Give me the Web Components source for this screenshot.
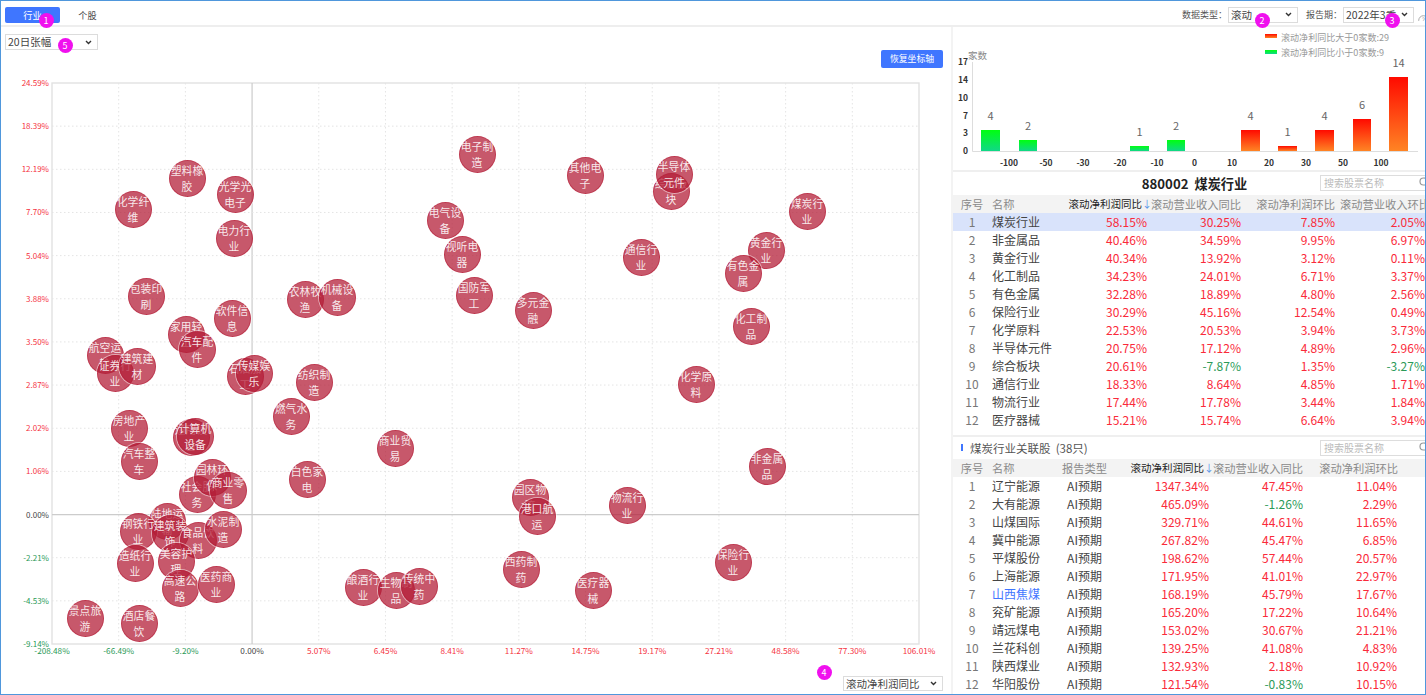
<!DOCTYPE html>
<html lang="zh-CN">
<head>
<meta charset="UTF-8">
<title>行业业绩分布</title>
<style>
  html, body { margin: 0; padding: 0; background: #fff; font-family: "Noto Sans CJK SC", "Liberation Sans", sans-serif; }
</style>
</head>
<body>
<stock-screen>
  <top-bar slot="bar">
    <tab-button active>行业</tab-button>
    <tab-button>个股</tab-button>
    <span slot="right" class="lb">数据类型：</span>
    <drop-select slot="right" style="width:70px;margin-right:8px">滚动</drop-select>
    <span slot="right" class="lb">报告期：</span>
    <drop-select slot="right" style="width:71px">2022年3季</drop-select>
    <help-mark slot="right"></help-mark>
  </top-bar>

  <left-panel slot="left">
    <drop-select slot="top" style="width:93px">20日张幅</drop-select>
    <blue-button slot="action">恢复坐标轴</blue-button>
    <scatter-chart id="scatter"></scatter-chart>
    <drop-select slot="bottom" style="width:100px;height:15px">滚动净利润同比</drop-select>
  </left-panel>

  <right-panel slot="right">
    <histo-chart slot="histo"></histo-chart>
    <panel-head slot="head1" center>880002&nbsp; 煤炭行业</panel-head>
    <data-table slot="table1" id="t1" cols="38px 60px 96px 94px 94px 90px"></data-table>
    <panel-head slot="head2" mark>煤炭行业关联股&nbsp; (38只)</panel-head>
    <data-table slot="table2" id="t2" cols="38px 71px 45px 102px 94px 94px 28px"></data-table>
  </right-panel>

  <step-badge x="46" y="20">1</step-badge>
  <step-badge x="1262" y="20">2</step-badge>
  <step-badge x="1392" y="20">3</step-badge>
  <step-badge x="824" y="672">4</step-badge>
  <step-badge x="65" y="45">5</step-badge>
</stock-screen>

<script>
const FONT = '"Noto Sans CJK SC", "Liberation Sans", sans-serif';
const RED = '#fa2a3a', GREEN = '#2b9a58', BLUE = '#3f76ff';

// 간단히 shadow 붙이는 공통 클래스
class Base extends HTMLElement {
  render(html) {
    if (!this.shadowRoot) this.attachShadow({ mode: 'open' });
    this.shadowRoot.innerHTML = html;
  }
}

class StockScreen extends Base {
  connectedCallback() {
    this.render(`<style>
      :host { display: block; position: relative; box-sizing: border-box; width: 1426px; height: 695px;
              border: 1px solid #4f97dc; overflow: hidden; font-family: ${FONT}; background: #fff; }
      .main { display: grid; grid-template-columns: 950px 472px; column-gap: 2px; background: #f3f3f3; height: 667px; }
    </style>
    <slot name="bar"></slot>
    <div class="main"><slot name="left"></slot><slot name="right"></slot></div>
    <slot></slot>`);
  }
}

class TopBar extends Base {
  connectedCallback() {
    this.render(`<style>
      :host { display: flex; align-items: center; justify-content: space-between; box-sizing: border-box;
              height: 26px; padding: 3px 0 0 4px; border-bottom: 2px solid #eee; background: #fff; }
      .l { display: flex; align-items: center; }
      .r { display: flex; align-items: center; }
      ::slotted(.lb) { font-size: 9px; color: #555; margin-right: 1px; white-space: nowrap; }
    </style>
    <div class="l"><slot></slot></div><div class="r"><slot name="right"></slot></div>`);
  }
}

class TabButton extends Base {
  connectedCallback() {
    this.render(`<style>
      :host { display: flex; align-items: center; justify-content: center; width: 55px; height: 16px;
              font-size: 9.2px; line-height: 16px; border-radius: 2px; color: #444; }
      :host([active]) { background: ${BLUE}; color: #fff; }
    </style><slot></slot>`);
  }
}

class DropSelect extends Base {
  connectedCallback() {
    this.render(`<style>
      :host { display: flex; align-items: center; justify-content: space-between; box-sizing: border-box; height: 16px;
              padding: 0 5px 0 2px; border: 1px solid #dcdcdc; background: #fff; font-size: 10.5px; color: #444;
              line-height: 14px; white-space: nowrap; overflow: hidden; }
      svg { flex: none; }
    </style><slot></slot>
    <svg width="7" height="5" viewBox="0 0 7 5"><path d="M1 1l2.5 2.5L6 1" fill="none" stroke="#333" stroke-width="1.4"/></svg>`);
  }
}

class HelpMark extends Base {
  connectedCallback() {
    this.render(`<style>
      :host { display: block; width: 8px; height: 13px; margin-left: 3px; overflow: hidden; }
    </style>
    <svg width="12" height="13" viewBox="0 0 12 13"><circle cx="6.5" cy="6.5" r="4.8" fill="none" stroke="#aaa"/>
    <text x="6.5" y="9" text-anchor="middle" font-size="7" fill="#aaa">?</text></svg>`);
  }
}

class BlueButton extends Base {
  connectedCallback() {
    this.render(`<style>
      :host { display: flex; align-items: center; justify-content: center; width: 62px; height: 18px; border-radius: 2px;
              background: ${BLUE}; color: #fff; font-size: 8.8px; line-height: 18px; }
    </style><slot></slot>`);
  }
}

class LeftPanel extends Base {
  connectedCallback() {
    this.render(`<style>
      :host { display: block; background: #fff; height: 667px; }
      .top { display: flex; padding: 7px 0 0 4px; }
      .act { display: flex; justify-content: flex-end; padding-right: 8px; }
      .chart { margin-top: 2px; }
      .bot { display: flex; justify-content: flex-end; padding: 6px 8px 0 0; }
    </style>
    <div class="top"><slot name="top"></slot></div>
    <div class="act"><slot name="action"></slot></div>
    <div class="chart"><slot></slot></div>
    <div class="bot"><slot name="bottom"></slot></div>`);
  }
}

class RightPanel extends Base {
  connectedCallback() {
    this.render(`<style>
      :host { display: flex; flex-direction: column; background: #fff; height: 667px; overflow: hidden; }
      .sep { height: 2px; background: #efefef; flex: none; }
      .gap { height: 6px; flex: none; }
    </style>
    <slot name="histo"></slot><div class="sep"></div>
    <slot name="head1"></slot><slot name="table1"></slot>
    <div class="gap"></div><div class="sep"></div>
    <slot name="head2"></slot><slot name="table2"></slot>`);
  }
}

class PanelHead extends Base {
  connectedCallback() {
    const center = this.hasAttribute('center');
    this.render(`<style>
      :host { display: flex; position: relative; align-items: center; box-sizing: border-box; height: ${center ? 23 : 22}px;
              flex: none; color: ${center ? '#222' : '#555'}; font-size: ${center ? '13.2px' : '11.5px'};
              font-weight: ${center ? 700 : 400}; justify-content: ${center ? 'center' : 'flex-start'};
              padding-left: ${center ? 11 : 17}px; white-space: nowrap; }
      i { position: absolute; left: 8px; top: 7px; width: 2px; height: 7px; background: ${BLUE}; }
      .s { position: absolute; left: 367px; top: 3px; width: 120px; height: 16px; box-sizing: border-box; border: 1px solid #ddd;
           font: 400 10px/14px ${FONT}; color: #bbb; padding-left: 3px; background: #fff; }
      svg { position: absolute; left: 97px; top: 0; }
    </style>${this.hasAttribute('mark') ? '<i></i>' : ''}<slot></slot>
    <div class="s">搜索股票名称<svg width="12" height="13" viewBox="0 0 12 13"><circle cx="5.5" cy="5.5" r="3.5" fill="none" stroke="#999" stroke-width="1.2"/><path d="M8 8l3 3" stroke="#999" stroke-width="1.2"/></svg></div>`);
  }
}

class DataTable extends Base {
  setData(head, rows) {
    const cols = this.getAttribute('cols');
    const color = v => v.startsWith('-') ? GREEN : RED;
    const cell = (c, i) => {
      if (i === 0) return `<div class="idx">${c}</div>`;
      if (i === 1) return `<div class="name${c.startsWith('*') ? ' link' : ''}">${c.replace('*', '')}</div>`;
      if (c === 'AI预期') return `<div class="ai">${c}</div>`;
      return `<div class="num" style="color:${color(c)}">${c}</div>`;
    };
    const hcell = (c, i) => {
      if (i < 2) return `<div class="${i ? 'hname' : 'idx hi'}">${c}</div>`;
      if (c === '报告类型') return `<div class="hname" style="padding:0">${c}</div>`;
      if (c.endsWith('↓')) return `<div class="hn sort">${c.slice(0, -1)}<b>↓</b></div>`;
      return `<div class="hn">${c}</div>`;
    };
    const last = this.id === 't1' ? -5 : -1;
    this.render(`<style>
      :host { display: block; flex: none; overflow: hidden; }
      .row { display: grid; grid-template-columns: ${cols}; height: 18px; line-height: 18px; font-size: 12px; color: #444; white-space: nowrap; }
      .row.sel { background: #d9e3fb; }
      .row.h { background: #f3f3f3; font-size: 11.25px; color: #8a8a8a; }
      .idx { text-align: center; color: #777; }
      .hi { color: #8a8a8a; }
      .name { padding-left: 1px; color: #444; }
      .hname { padding-left: 1px; }
      .link { color: ${BLUE}; }
      .ai { text-align: center; color: #444; }
      .num { text-align: right; }
      .hn { display: flex; justify-content: flex-end; }
      .hn:last-child { margin-right: ${last}px; }
      .sort { color: #222; font-size: 10.5px; margin-right: -1px; }
      .sort b { font-weight: 400; color: #5a93e8; font-size: 10px; width: 6px; }
    </style>
    <div class="row h">${head.map(hcell).join('')}</div>
    ${rows.map((r, n) => `<div class="row${this.id === 't1' && n === 0 ? ' sel' : ''}">${r.map(cell).join('')}</div>`).join('')}`);
  }
}

class HistoChart extends Base {
  connectedCallback() {
    const bars = [
      [981, 19, 130, 4, 'g'], [1019, 18, 140, 2, 'g'], [1130, 19, 146, 1, 'g'], [1167, 18, 140, 2, 'g'],
      [1241, 19, 130, 4, 'r'], [1278, 19, 146, 1, 'r'], [1315, 19, 130, 4, 'r'], [1353, 18, 119, 6, 'r'], [1389, 19, 77, 14, 'r']
    ];
    const X0 = 953, Y0 = 27;
    const yl = [[17, 62], [14, 80], [10, 98], [7, 116], [3, 133], [0, 151]];
    const xl = [[-100, 1009], [-50, 1046], [-30, 1083], [-20, 1120], [-10, 1157], [0, 1194.5], [10, 1232], [20, 1269], [30, 1306], [50, 1343], [100, 1381]];
    let s = '';
    bars.forEach(b => {
      s += `<rect x="${b[0] - X0}" y="${b[2] - Y0}" width="${b[1]}" height="${151 - b[2]}" fill="url(#${b[4]})"/>`;
      s += `<text x="${b[0] + b[1] / 2 - X0}" y="${b[2] - 10 - Y0}" text-anchor="middle" font-size="11" fill="#666">${b[3]}</text>`;
    });
    yl.forEach(l => { s += `<text x="${968 - X0}" y="${l[1] + 3 - Y0}" text-anchor="end" font-size="8.5" fill="#333" font-weight="600">${l[0]}</text>`; });
    xl.forEach(l => { s += `<text x="${l[1] - X0}" y="${166 - Y0}" text-anchor="middle" font-size="8.5" fill="#333" font-weight="600">${l[0]}</text>`; });
    this.render(`<style>
      :host { display: block; flex: none; height: 143px; overflow: hidden; }
      svg { display: block; font-family: ${FONT}; }
    </style>
    <svg width="472" height="143">
      <defs>
        <linearGradient id="g" x1="0" y1="0" x2="0" y2="1"><stop offset="0" stop-color="#00ff10"/><stop offset="1" stop-color="#10d888"/></linearGradient>
        <linearGradient id="r" x1="0" y1="0" x2="0" y2="1"><stop offset="0" stop-color="#ff0a00"/><stop offset="1" stop-color="#ff8424"/></linearGradient>
      </defs>
      <path d="M${972.5 - X0} ${62 - Y0}V${151.5 - Y0}H${1418 - X0}" fill="none" stroke="#ddd"/>
      <text x="${968 - X0}" y="${59 - Y0}" font-size="9.5" fill="#888">家数</text>
      <rect x="${1265 - X0}" y="${34 - Y0}" width="12" height="4" fill="url(#r)"/>
      <text x="${1281 - X0}" y="${41 - Y0}" font-size="9.05" fill="#999">滚动净利同比大于0家数:29</text>
      <rect x="${1265 - X0}" y="${50 - Y0}" width="12" height="4" fill="url(#g)"/>
      <text x="${1281 - X0}" y="${56 - Y0}" font-size="9.05" fill="#999">滚动净利同比小于0家数:9</text>
      ${s}
    </svg>`);
  }
}

class ScatterChart extends Base {
  connectedCallback() {
    const OX = 1, OY = 70, L = 52, R = 919, T = 83, B = 644;
    const xs = ['-208.48', '-66.49', '-9.20', '0.00', '5.07', '6.45', '8.41', '11.27', '14.75', '19.17', '27.21', '48.58', '77.30', '106.01'];
    const ys = ['24.59', '18.39', '12.19', '7.70', '5.04', '3.88', '3.50', '2.87', '2.02', '1.06', '0.00', '-2.21', '-4.53', '-9.14'];
    const col = v => v === '0.00' ? '#444' : (v[0] === '-' ? GREEN : '#f5333f');
    let s = '';
    xs.forEach((v, i) => {
      const x = L + i * (R - L) / 13 - OX;
      if (v === '0.00') s += `<path d="M${x} ${T - OY}V${B - OY}" stroke="#ccc" stroke-width="1.2"/>`;
      else if (i > 0 && i < 13) s += `<path d="M${x} ${T - OY}V${B - OY}" stroke="#e4e4e4" stroke-dasharray="1.5 2.5"/>`;
      s += `<text x="${x}" y="${654 - OY}" text-anchor="middle" font-size="8.2" fill="${col(v)}">${v}%</text>`;
    });
    ys.forEach((v, i) => {
      const y = T + i * (B - T) / 13 - OY;
      if (v === '0.00') s += `<path d="M${L - OX} ${y}H${R - OX}" stroke="#ccc" stroke-width="1.2"/>`;
      else if (i > 0 && i < 13) s += `<path d="M${L - OX} ${y}H${R - OX}" stroke="#e4e4e4" stroke-dasharray="1.5 2.5"/>`;
      s += `<text x="${49 - OX}" y="${y + 3}" text-anchor="end" font-size="8" fill="${col(v)}">${v}%</text>`;
    });
    this.render(`<style>
      :host { display: block; position: relative; height: 600px; }
      svg { position: absolute; left: 0; top: 0; font-family: ${FONT}; }
    </style>
    <svg width="950" height="600">
      <rect x="${L - OX}" y="${T - OY}" width="${R - L}" height="${B - T}" fill="none" stroke="#e2e2e2" stroke-width="1.4"/>
      ${s}
    </svg><slot></slot>`);
  }
}

// 버블 하나 (x, y는 화면 기준 좌표)
class ChartBubble extends Base {
  connectedCallback() {
    const x = +this.getAttribute('x') - 1 - 18.5, y = +this.getAttribute('y') - 70 - 18.5;
    this.render(`<style>
      :host { display: flex; position: absolute; left: ${x}px; top: ${y}px; width: 37px; height: 37px; box-sizing: border-box;
              align-items: center; justify-content: center; text-align: center; border-radius: 50%;
              background: rgba(180, 30, 55, .74); border: 1px solid rgba(180, 30, 55, .55);
              box-shadow: 0 0 0 1px rgba(255, 255, 255, .5);
              color: rgba(255, 255, 255, .88); font-size: 10.8px; line-height: 16px; }
      div { width: 33px; flex: none; word-break: break-all; }
    </style><div><slot></slot></div>`);
  }
}

class StepBadge extends Base {
  connectedCallback() {
    const x = +this.getAttribute('x') - 1 - 7.5, y = +this.getAttribute('y') - 1 - 7.5;
    this.render(`<style>
      :host { display: flex; position: absolute; left: ${x}px; top: ${y}px; width: 15px; height: 15px; border-radius: 50%;
              align-items: center; justify-content: center; background: #f010ee; color: #fff; font-size: 9px; line-height: 15px; }
    </style><slot></slot>`);
  }
}

customElements.define('stock-screen', StockScreen);
customElements.define('top-bar', TopBar);
customElements.define('tab-button', TabButton);
customElements.define('drop-select', DropSelect);
customElements.define('help-mark', HelpMark);
customElements.define('blue-button', BlueButton);
customElements.define('left-panel', LeftPanel);
customElements.define('right-panel', RightPanel);
customElements.define('panel-head', PanelHead);
customElements.define('data-table', DataTable);
customElements.define('histo-chart', HistoChart);
customElements.define('scatter-chart', ScatterChart);
customElements.define('chart-bubble', ChartBubble);
customElements.define('step-badge', StepBadge);

// 버블 데이터: 그리는 순서가 겹침 순서
const bubbles = [
  ['化学纤维',133,209],['塑料橡胶',187,178],['光学光电子',235,194],['电力行业',234,238],['电子制造',477,154],['其他电子',585,175],
  ['综合板块',671,191],['半导体元件',674,174],['煤炭行业',807,211],['电气设备',445,220],['视听电器',462,254],['通信行业',641,257],
  ['黄金行业',766,250],['有色金属',743,273],['包装印刷',146,296],['农林牧渔',305,299],['机械设备',337,297],['国防军工',474,295],
  ['多元金融',533,310],['软件信息',232,318],['家用轻工',186,334],['汽车配件',197,349],['化工制品',751,326],['航空运输',105,355],
  ['证券行业',115,373],['建筑建材',137,366],['石油加工',245,376],['传媒娱乐',254,373],['纺织制造',314,382],['化学原料',696,384],
  ['燃气水务',291,416],['房地产业',129,428],['通用设备',191,437],['计算机设备',195,436],['商业贸易',395,448],['汽车整车',139,461],
  ['非金属品',767,466],['白色家电',307,479],['社会服务',197,494],['园林环保',212,477],['商业零售',228,490],['园区物流',530,497],
  ['港口航运',537,516],['物流行业',627,505],['陆地运输',167,521],['钢铁行业',138,531],['建筑装饰',170,533],['食品饮料',198,540],
  ['水泥制造',223,529],['造纸行业',135,563],['美容护理',176,561],['高速公路',180,588],['医药商业',216,584],['景点旅游',85,618],
  ['酒店餐饮',139,623],['酿酒行业',363,587],['生物制品',396,590],['传统中药',419,586],['西药制药',521,569],['医疗器械',593,590],
  ['保险行业',733,562]
];
const scatter = document.getElementById('scatter');
bubbles.forEach(b => {
  const el = document.createElement('chart-bubble');
  el.setAttribute('x', b[1]);
  el.setAttribute('y', b[2]);
  el.textContent = b[0];
  scatter.appendChild(el);
});

const pct = a => a.map(r => r.map(c => (typeof c === 'number' ? c.toFixed(2) + '%' : c)));
document.getElementById('t1').setData(
  ['序号', '名称', '滚动净利润同比↓', '滚动营业收入同比', '滚动净利润环比', '滚动营业收入环比'],
  pct([
    ['1','煤炭行业',58.15,30.25,7.85,2.05],['2','非金属品',40.46,34.59,9.95,6.97],['3','黄金行业',40.34,13.92,3.12,0.11],
    ['4','化工制品',34.23,24.01,6.71,3.37],['5','有色金属',32.28,18.89,4.80,2.56],['6','保险行业',30.29,45.16,12.54,0.49],
    ['7','化学原料',22.53,20.53,3.94,3.73],['8','半导体元件',20.75,17.12,4.89,2.96],['9','综合板块',20.61,-7.87,1.35,-3.27],
    ['10','通信行业',18.33,8.64,4.85,1.71],['11','物流行业',17.44,17.78,3.44,1.84],['12','医疗器械',15.21,15.74,6.64,3.94]
  ])
);
document.getElementById('t2').setData(
  ['序号', '名称', '报告类型', '滚动净利润同比↓', '滚动营业收入同比', '滚动净利润环比'],
  pct([
    ['1','辽宁能源','AI预期',1347.34,47.45,11.04],['2','大有能源','AI预期',465.09,-1.26,2.29],['3','山煤国际','AI预期',329.71,44.61,11.65],
    ['4','冀中能源','AI预期',267.82,45.47,6.85],['5','平煤股份','AI预期',198.62,57.44,20.57],['6','上海能源','AI预期',171.95,41.01,22.97],
    ['7','*山西焦煤','AI预期',168.19,45.79,17.67],['8','兖矿能源','AI预期',165.20,17.22,10.64],['9','靖远煤电','AI预期',153.02,30.67,21.21],
    ['10','兰花科创','AI预期',139.25,41.08,4.83],['11','陕西煤业','AI预期',132.93,2.18,10.92],['12','华阳股份','AI预期',121.54,-0.83,10.15]
  ])
);
</script>
</body>
</html>
